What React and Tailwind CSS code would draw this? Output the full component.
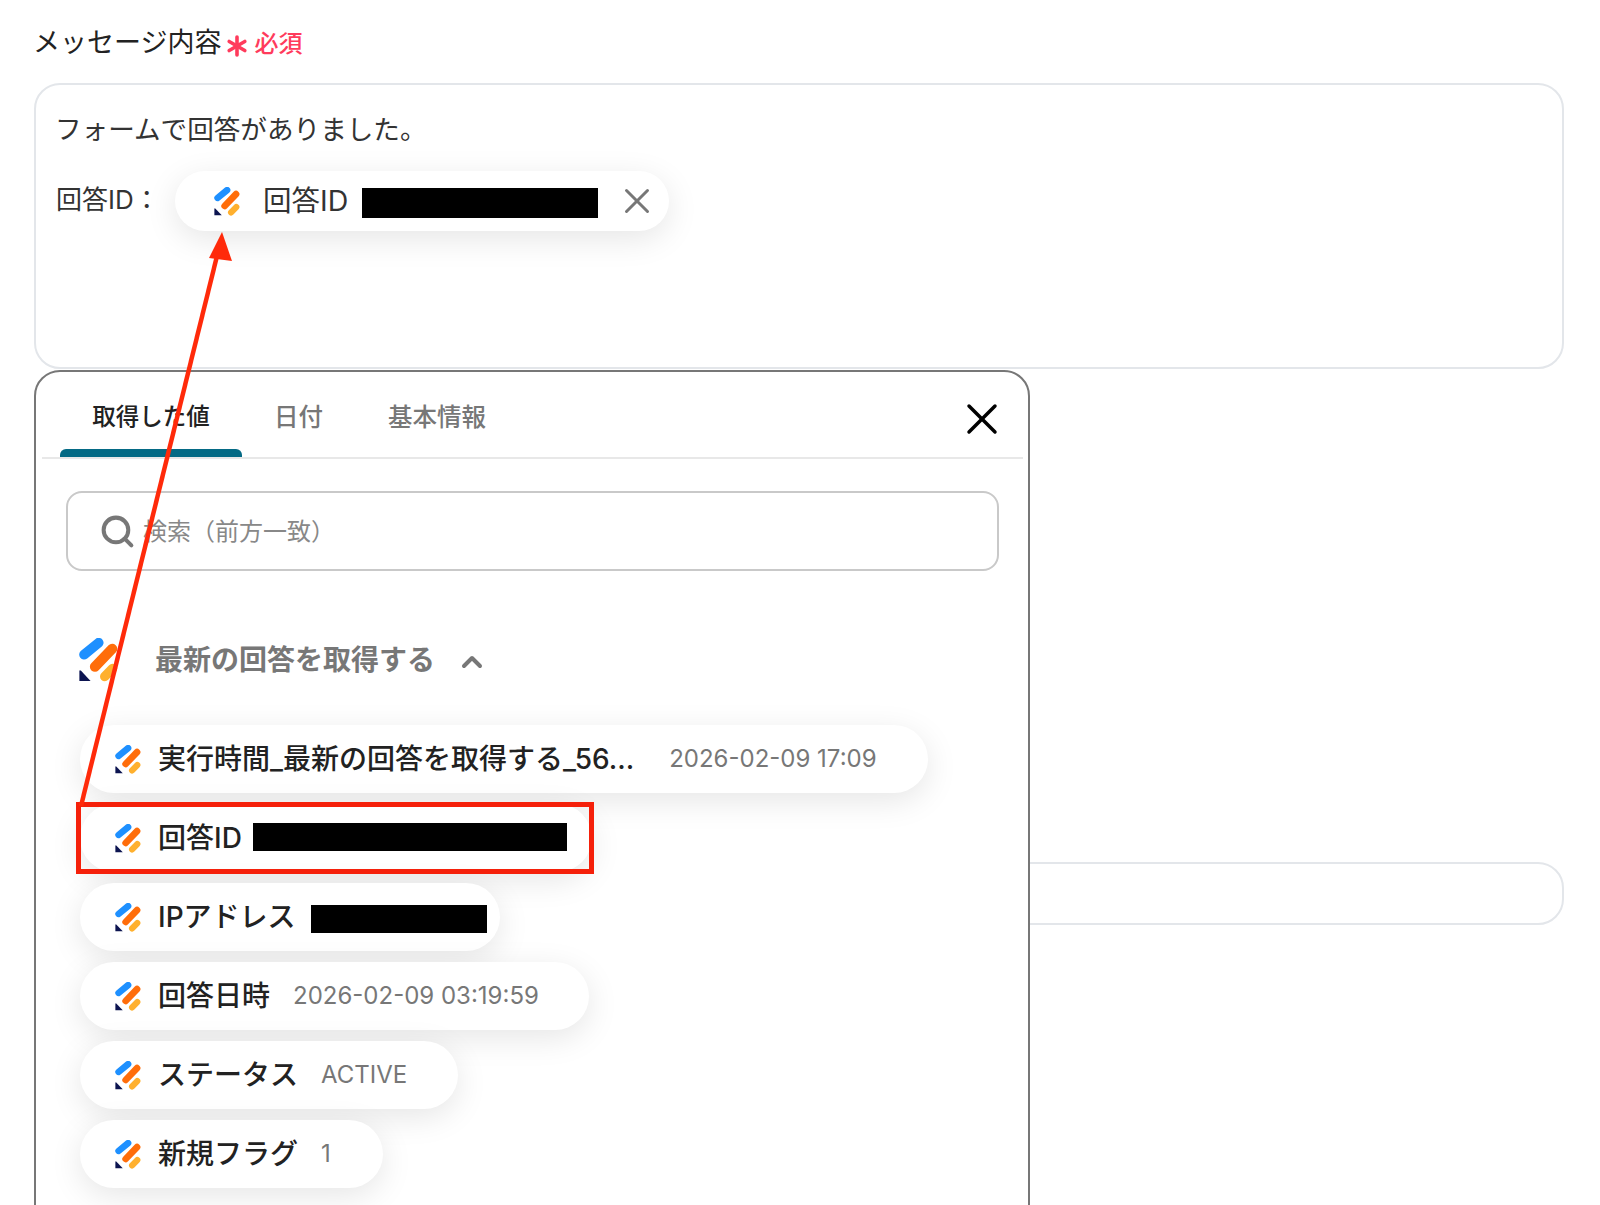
import React from "react";
import { X, ChevronUp, Search, Asterisk } from "lucide-react";

const fontStack = "font-['Inter','Noto_Sans_CJK_JP',sans-serif]";

const Logo = ({ className }) => (
  <svg className={className} viewBox="27 25 113 130" fill="none">
    <path d="M41 74L84 39" stroke="#1e90ff" strokeWidth="29" strokeLinecap="round" />
    <path d="M73 110L124 57" stroke="#ff6d0a" strokeWidth="30" strokeLinecap="round" />
    <path d="M102 139L125 115" stroke="#ffb02e" strokeWidth="28" strokeLinecap="round" />
    <path d="M27 124Q27 118 32 122L60 152H27Z" fill="#0c1450" />
  </svg>
);

const Redacted = ({ className }) => <div className={`bg-black ${className}`} />;

const Pill = ({ width, label, children }) => (
  <div
    className={`flex h-[68px] items-center rounded-full bg-white pl-[35px] shadow-[0_8px_32px_rgba(0,0,0,0.1)] ${width}`}
  >
    <Logo className="h-[29px] w-[26px] shrink-0" />
    <span className="ml-[17px] whitespace-nowrap text-[28px] font-medium text-[#222]">{label}</span>
    {children}
  </div>
);

const PillValue = ({ children }) => (
  <span className="ml-[23px] whitespace-nowrap text-[24px] text-[#777]">{children}</span>
);

export default function App() {
  return (
    <div className={`relative h-[1205px] w-full overflow-hidden bg-white ${fontStack}`}>
      <div className="pl-[34px] pr-[36px] pt-[24px]">
        <div className="flex h-[38px] items-center">
          <span className="-ml-[1px] text-[27px] text-[#222]">メッセージ内容</span>
          <Asterisk className="-ml-[2px] mt-[6px] size-[36px] shrink-0 text-[#ff3b5c]" strokeWidth={2.4} />
          <span className="-ml-[1px] mt-[2px] text-[24px] font-medium text-[#ff3b5c]">必須</span>
        </div>
        <div className="mt-[21px] h-[286px] rounded-[26px] border-2 border-[#e3e6ea] pl-[19px] pr-[20px] pt-[24px]">
          <div className="text-[26.6px] leading-[40px] text-[#333]">フォームで回答がありました。</div>
          <div className="mt-[22px] flex items-center">
            <span className="mb-[4px] ml-[1px] w-[119px] text-[26px] text-[#333]">回答ID：</span>
            <div className="flex h-[60px] w-[494px] items-center rounded-full bg-white pl-[39px] shadow-[0_8px_32px_rgba(0,0,0,0.1)]">
              <Logo className="h-[29px] w-[26px] shrink-0" />
              <span className="ml-[23px] whitespace-nowrap text-[28.5px] text-[#333]">回答ID</span>
              <Redacted className="ml-[14px] mt-[3px] h-[30px] w-[236px]" />
              <X className="ml-[18px] size-[42px] text-[#777]" strokeWidth={1.7} />
            </div>
          </div>
        </div>
        <div className="mt-[493px] h-[63px] rounded-[26px] border-2 border-[#e3e6ea]" />
      </div>

      {/* value picker popover */}
      <div className="absolute left-[34px] top-[370px] h-[900px] w-[996px] rounded-[26px] border-2 border-[#777] bg-white px-[5px]">
        <div className="relative ml-[1px] flex h-[87px] border-b-2 border-[#e8e8e8] pl-[18px]">
          <div className="relative flex w-[182px] justify-center pt-[28px] text-[23.5px] font-medium leading-[34px] text-[#222]">
            取得した値
            <div className="absolute inset-x-0 bottom-0 h-[8px] rounded-t-[6px] bg-[#046a85]" />
          </div>
          <div className="ml-[32px] pt-[28px] text-[24.5px] font-medium leading-[34px] text-[#777]">日付</div>
          <div className="ml-[65px] pt-[28px] text-[24.5px] font-medium leading-[34px] text-[#777]">基本情報</div>
          <X className="absolute right-[15px] top-[21px] size-[52px] text-black" strokeWidth={1.6} />
        </div>

        <div className="ml-[25px] mt-[32px] flex h-[80px] w-[933px] items-center rounded-[16px] border-2 border-[#c9c9c9] pl-[31px]">
          <Search className="size-[37px] shrink-0 text-[#777]" strokeWidth={2.6} />
          <span className="ml-[7px] mt-[2px] text-[24px] text-[#888]">検索（前方一致）</span>
        </div>

        <div className="ml-[38px] mt-[67px] flex items-center">
          <Logo className="h-[44px] w-[39px]" />
          <span className="ml-[37px] text-[28px] font-semibold text-[#777]">最新の回答を取得する</span>
          <ChevronUp className="ml-[21px] mt-[3px] size-[32px] text-[#777]" strokeWidth={3} />
        </div>

        <div className="ml-[39px] mt-[43px] flex flex-col gap-[11px]">
          <Pill width="w-[848px]" label="実行時間_最新の回答を取得する_56...">
            <span className="ml-[35px] whitespace-nowrap text-[24px] text-[#777]">2026-02-09 17:09</span>
          </Pill>
          <Pill width="w-[512px]" label="回答ID">
            <Redacted className="mb-[3px] ml-[11px] h-[28px] w-[314px]" />
          </Pill>
          <Pill width="w-[420px]" label="IPアドレス">
            <Redacted className="ml-[15px] mt-[3px] h-[28px] w-[176px]" />
          </Pill>
          <Pill width="w-[509px]" label="回答日時">
            <PillValue>2026-02-09 03:19:59</PillValue>
          </Pill>
          <Pill width="w-[378px]" label="ステータス">
            <PillValue>ACTIVE</PillValue>
          </Pill>
          <Pill width="w-[303px]" label="新規フラグ">
            <PillValue>1</PillValue>
          </Pill>
        </div>
      </div>

      {/* annotation overlay */}
      <div className="absolute left-[76px] top-[802px] h-[72px] w-[518px] border-[5px] border-[#f5200a]" />
      <svg className="absolute left-0 top-0" width="1600" height="1205" fill="none">
        <path d="M81 806L217 256" stroke="#ff2a0a" strokeWidth="4.5" />
        <path d="M222 232L209 258L232 261Z" fill="#ff2a0a" />
      </svg>
    </div>
  );
}
